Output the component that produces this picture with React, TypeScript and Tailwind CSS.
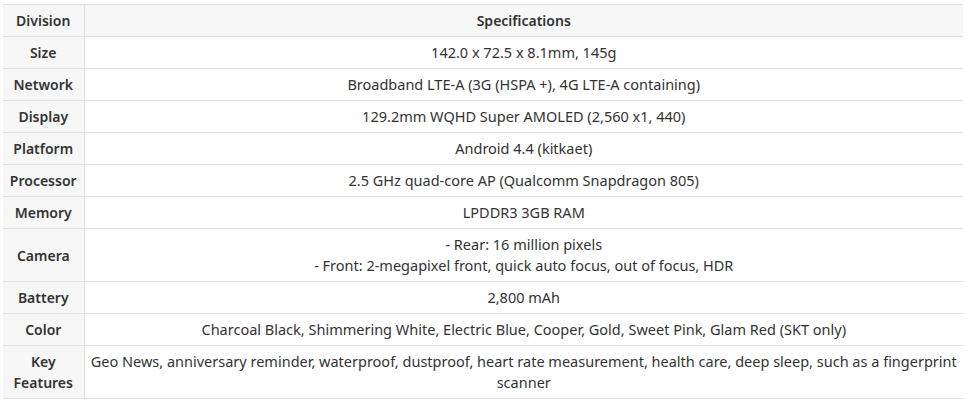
import React from 'react';

const rows: { label: React.ReactNode; value: React.ReactNode }[] = [
    { label: 'Size', value: '142.0 x 72.5 x 8.1mm, 145g' },
    { label: 'Network', value: 'Broadband LTE-A (3G (HSPA +), 4G LTE-A containing)' },
    { label: 'Display', value: '129.2mm WQHD Super AMOLED (2,560 x1, 440)' },
    { label: 'Platform', value: 'Android 4.4 (kitkaet)' },
    { label: 'Processor', value: '2.5 GHz quad-core AP (Qualcomm Snapdragon 805)' },
    { label: 'Memory', value: 'LPDDR3 3GB RAM' },
    {
        label: 'Camera',
        value: (
            <>
                - Rear: 16 million pixels
                <br />
                - Front: 2-megapixel front, quick auto focus, out of focus, HDR
            </>
        ),
    },
    { label: 'Battery', value: '2,800 mAh' },
    { label: 'Color', value: 'Charcoal Black, Shimmering White, Electric Blue, Cooper, Gold, Sweet Pink, Glam Red (SKT only)' },
    {
        label: (
            <>
                Key
                <br />
                Features
            </>
        ),
        value: 'Geo News, anniversary reminder, waterproof, dustproof, heart rate measurement, health care, deep sleep, such as a fingerprint scanner',
    },
];

export default function App() {
    return (
        <div className="bg-white min-h-screen pt-[4px] pl-[3px] pr-[4px] font-['Noto_Sans','Noto_Sans_CJK_KR',sans-serif] text-[14px] leading-[21px] text-[#333]">
            <table className="w-[960px] border-collapse table-fixed">
                <colgroup>
                    <col className="w-[81px]" />
                    <col />
                </colgroup>
                <thead>
                    <tr className="bg-[#f7f7f7]">
                        <th className="border-y border-r border-[#e1e1e1] py-[5px] px-1 font-semibold text-center">Division</th>
                        <th className="border-y border-[#e1e1e1] py-[5px] px-1 font-semibold text-center">Specifications</th>
                    </tr>
                </thead>
                <tbody>
                    {rows.map((r, i) => (
                        <tr key={i}>
                            <td className="bg-[#f7f7f7] border-y border-r border-[#e1e1e1] py-[5px] px-1 font-semibold text-center">{r.label}</td>
                            <td className="border-y border-[#e1e1e1] py-[5px] px-1 text-center text-[14.5px]">{r.value}</td>
                        </tr>
                    ))}
                </tbody>
            </table>
        </div>
    );
}
